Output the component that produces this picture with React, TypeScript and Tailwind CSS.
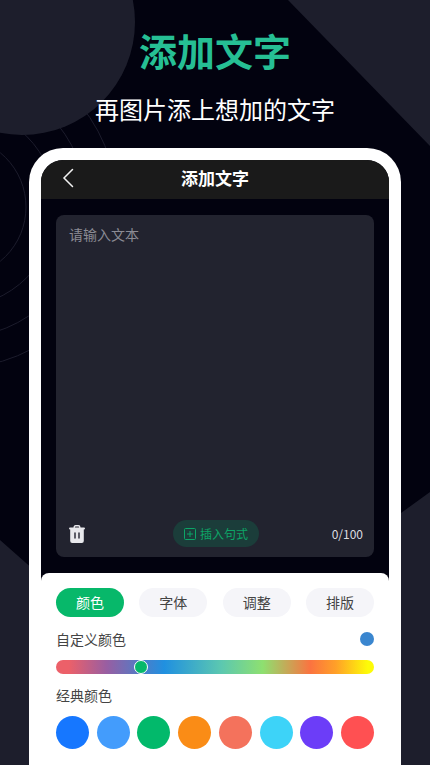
import { useState } from 'react';

const tabs = ['颜色', '字体', '调整', '排版'];

const swatches = [
  { name: '蓝色', color: 'bg-[#1677ff]' },
  { name: '浅蓝', color: 'bg-[#439cfc]' },
  { name: '绿色', color: 'bg-[#02b96b]' },
  { name: '橙色', color: 'bg-[#fa8c16]' },
  { name: '珊瑚', color: 'bg-[#f4725c]' },
  { name: '青色', color: 'bg-[#3dd3f8]' },
  { name: '紫色', color: 'bg-[#6c3df8]' },
  { name: '红色', color: 'bg-[#ff5052]' },
];

function Backdrop() {
  return (
    <svg
      className="absolute inset-0 -z-10 h-full w-full"
      viewBox="0 0 430 765"
      preserveAspectRatio="xMidYMin slice"
      aria-hidden="true"
    >
      <g fill="none" stroke="#1c1c2c" strokeWidth="1">
        <circle cx="-44" cy="207" r="70" />
        <circle cx="-44" cy="207" r="100" />
        <circle cx="-44" cy="207" r="131" />
        <circle cx="-44" cy="207" r="161" />
      </g>
      <g fill="#1d1e2c">
        <circle cx="22" cy="22" r="113" />
        <path d="M288 0H430V146Z" />
        <path d="M0 540L215 730L401 513L430 492V765H0Z" />
      </g>
    </svg>
  );
}

function BackIcon() {
  return (
    <svg width="12" height="20" viewBox="0 0 12 20" fill="none" stroke="#f2f2f2" strokeWidth="1.5" aria-hidden="true">
      <path d="M10.5 1.5L2 10L10.5 18.5" strokeLinecap="round" />
    </svg>
  );
}

function TrashIcon() {
  return (
    <svg width="16" height="18" viewBox="0 0 16 18" aria-hidden="true">
      <path d="M5.2 3V2.2Q5.2 .8 6.6 .8H9.4Q10.8 .8 10.8 2.2V3" fill="none" stroke="#e8e8ec" strokeWidth="1.4" />
      <rect x="0" y="2.6" width="16" height="2" rx="1" fill="#e8e8ec" />
      <path d="M1.2 4H14.8V16Q14.8 18 12.8 18H3.2Q1.2 18 1.2 16Z" fill="#e8e8ec" />
      <path d="M6 8V13M10 8V13" stroke="#22232f" strokeWidth="1.4" strokeLinecap="round" />
    </svg>
  );
}

function InsertIcon() {
  return (
    <svg width="12" height="12" viewBox="0 0 12 12" fill="none" stroke="currentColor" aria-hidden="true">
      <rect x=".5" y=".5" width="11" height="11" rx="1" />
      <path d="M6 3V9M3 6H9" />
    </svg>
  );
}

export default function App() {
  const [text, setText] = useState('');
  const [tab, setTab] = useState('颜色');
  const [hue, setHue] = useState(92);

  return (
    <main className="relative isolate flex min-h-screen flex-col overflow-hidden bg-[#02020f] pt-[26px] font-['Noto_Sans_CJK_SC',sans-serif]">
      <Backdrop />
      <h1 className="text-center text-[38px] leading-12 font-bold text-[#26bf94]">添加文字</h1>
      <p className="mt-[17px] text-center text-2xl leading-9 text-white">再图片添上想加的文字</p>

      <section className="mx-[29px] mt-[21px] flex flex-1 flex-col rounded-t-[34px] bg-white px-3 pt-3">
        <div className="flex flex-1 flex-col overflow-hidden rounded-t-[22px] bg-[#02020f]">
          <header className="grid h-[39px] grid-cols-[1fr_auto_1fr] items-center bg-[#1a1a1a] px-[21px] pb-[3px]">
            <button type="button" aria-label="返回" className="w-3">
              <BackIcon />
            </button>
            <h2 className="text-[17px] leading-6 font-bold text-white">添加文字</h2>
          </header>

          <div className="mx-[15px] my-4 flex flex-col rounded-lg bg-[#22232f]">
            <textarea
              aria-label="请输入文本"
              placeholder="请输入文本"
              maxLength={100}
              value={text}
              onChange={(e) => setText(e.target.value)}
              className="h-[305px] resize-none bg-transparent px-[13px] pt-[7px] text-sm leading-6 text-white outline-none placeholder:text-[#8b8b94]"
            />
            <div className="grid grid-cols-[1fr_auto_1fr] items-center pr-[11px] pb-[10px] pl-[13px]">
              <button type="button" aria-label="清空" className="w-4" onClick={() => setText('')}>
                <TrashIcon />
              </button>
              <button
                type="button"
                className="flex h-[27px] items-center gap-1 rounded-full bg-[#1b3d3a] px-[11px] text-xs text-[#0da567]"
              >
                <InsertIcon />
                插入句式
              </button>
              <span className="text-right text-xs text-[#dcdce0]">{text.length}/100</span>
            </div>
          </div>

          <div className="flex flex-1 flex-col rounded-t-lg bg-white px-[15px] pt-[15px] pb-4 text-sm text-[#444]">
            <div className="flex justify-between">
              {tabs.map((name) => (
                <button
                  key={name}
                  type="button"
                  aria-pressed={tab === name}
                  onClick={() => setTab(name)}
                  className={
                    tab === name
                      ? 'h-[29px] w-[68px] rounded-full bg-[#07b86a] pb-0.5 text-white'
                      : 'h-[29px] w-[68px] rounded-full bg-[#f5f5f9] pb-0.5'
                  }
                >
                  {name}
                </button>
              ))}
            </div>

            <div className="mt-3 flex items-center justify-between">
              <label htmlFor="hue" className="leading-5">
                自定义颜色
              </label>
              <button type="button" aria-label="当前颜色" className="size-[14px] rounded-full bg-[#3a86cf]" />
            </div>
            <input
              id="hue"
              type="range"
              min={0}
              max={360}
              value={hue}
              onChange={(e) => setHue(Number(e.target.value))}
              className="mt-[11px] block h-[14px] w-full appearance-none rounded-full bg-[linear-gradient(90deg,#ec6069_0%,#ec6069_4%,#985ea2_16%,#2090e0_34%,#5cc8b0_52%,#8ee070_65%,#fb7340_80%,#ffa028_88%,#fdfb08_98%)] [&::-webkit-slider-thumb]:size-[14px] [&::-webkit-slider-thumb]:appearance-none [&::-webkit-slider-thumb]:rounded-full [&::-webkit-slider-thumb]:border [&::-webkit-slider-thumb]:border-solid [&::-webkit-slider-thumb]:border-white [&::-webkit-slider-thumb]:bg-[#07b86a]"
            />

            <h3 className="mt-[11px] leading-5">经典颜色</h3>
            <div className="mt-[11px] flex justify-between">
              {swatches.map(({ name, color }) => (
                <button key={name} type="button" aria-label={name} className={`size-[33px] rounded-full ${color}`} />
              ))}
            </div>
          </div>
        </div>
      </section>
    </main>
  );
}
